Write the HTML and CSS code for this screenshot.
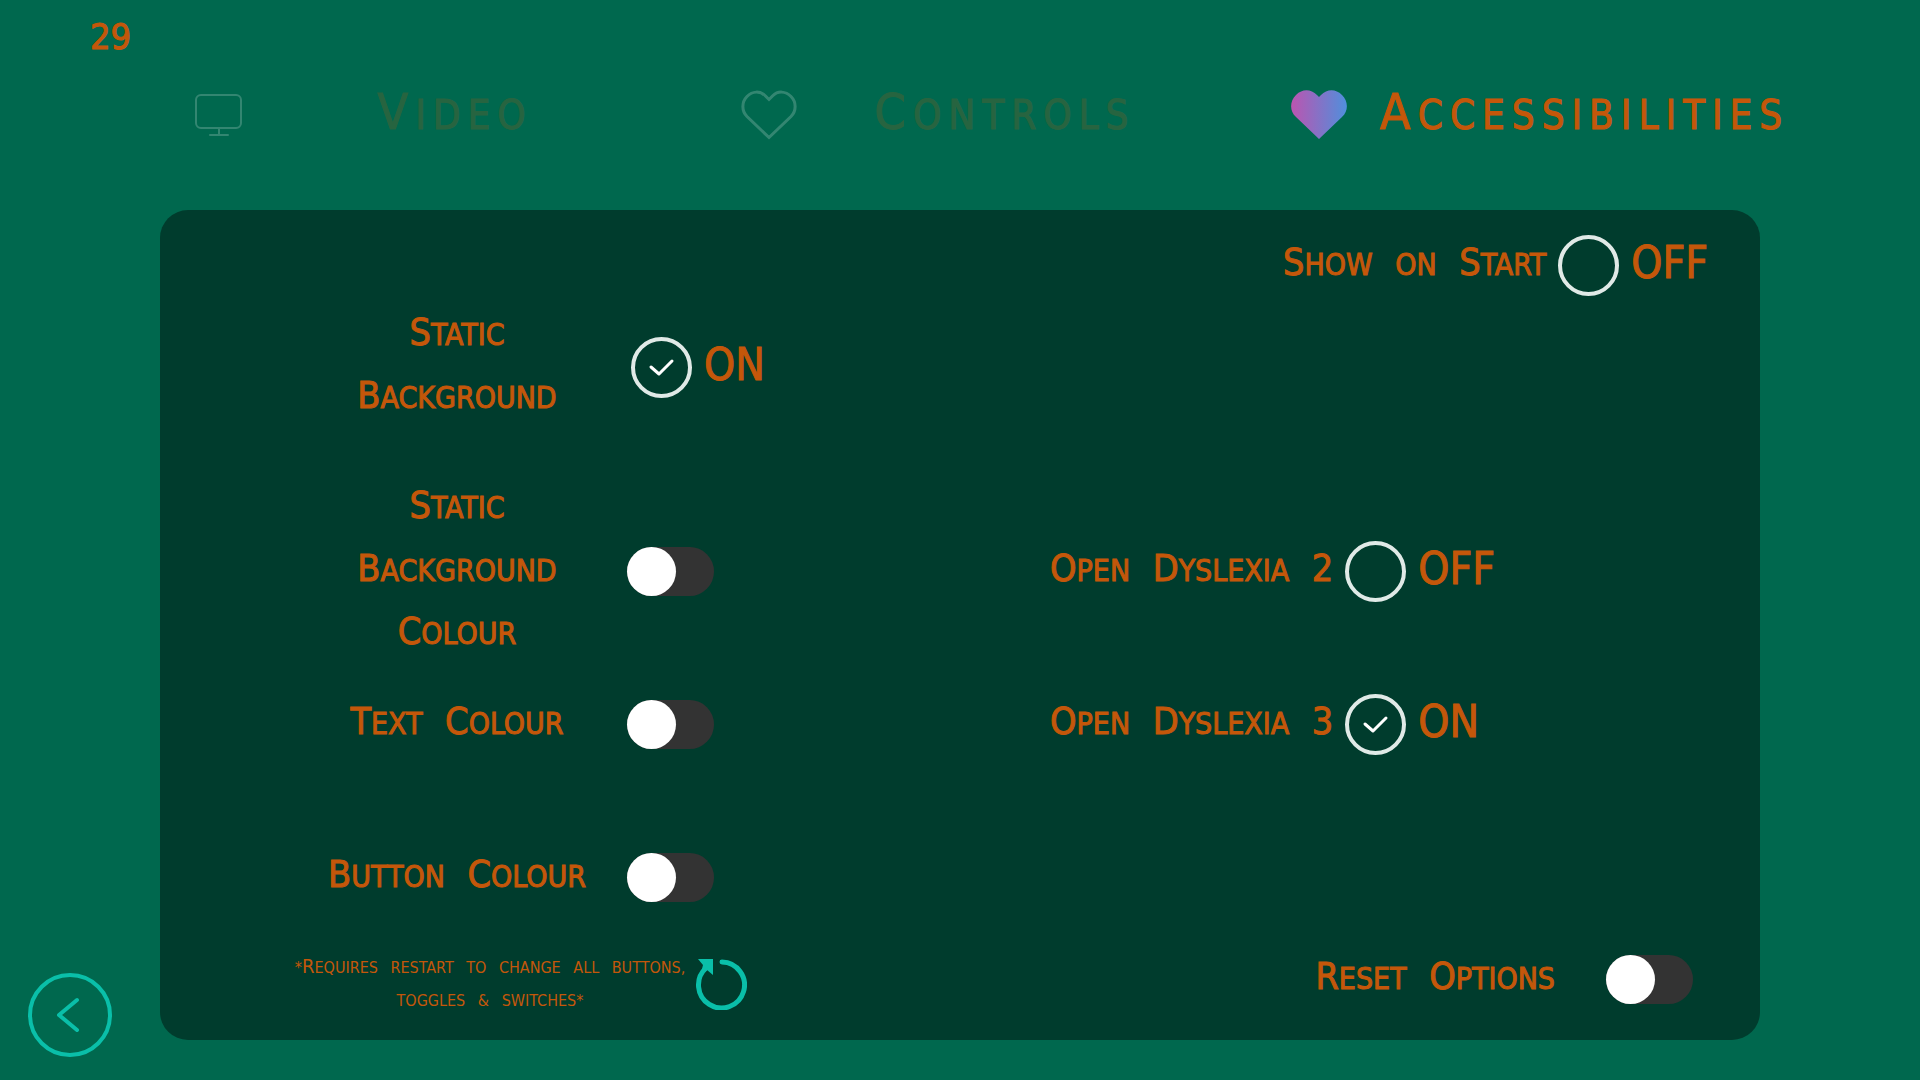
FILE: index.html
```html
<!DOCTYPE html>
<html lang="en">
<head>
    <meta charset="UTF-8">
    <meta name="viewport" content="width=device-width, initial-scale=1.0">
    <title>Options - Accessibilities</title>
    <link rel="stylesheet" href="styles.css">
</head>
<body>
    <div class="page">
        <header>
            <div class="fps">29</div>
            <nav class="tabs">
                <button type="button" class="tab">
                    <svg class="tab-icon" viewBox="0 0 56 50" fill="none" stroke="#fff" stroke-width="2" stroke-linecap="round">
                        <rect x="5" y="5" width="45" height="33" rx="5"/>
                        <path d="M28 38v7M19 45h18"/>
                    </svg>
                    <span class="tab-label"><span class="word">Video</span></span>
                </button>
                <button type="button" class="tab">
                    <svg class="tab-icon" viewBox="0 0 56 50" fill="none" stroke="#fff" stroke-width="3">
                        <path d="M28 47.500L6 26.500C.500 21 .500 12 6 6.500S19 .500 24.500 6L28 9.500L31.500 6C37 .500 44.500 1 50 6.500S55.500 21 50 26.500Z"/>
                    </svg>
                    <span class="tab-label"><span class="word">Controls</span></span>
                </button>
                <button type="button" class="tab active">
                    <svg class="tab-icon" viewBox="0 0 56 50">
                        <defs>
                            <linearGradient id="heart-fill">
                                <stop offset="0" stop-color="#bb55b0"/>
                                <stop offset="1" stop-color="#508fdc"/>
                            </linearGradient>
                        </defs>
                        <path fill="url(#heart-fill)" d="M28 49L5 27C-1.500 21-1.500 11.500 5 5S20-1 26 5L28 7L30 5C36-1 44.500-1.500 51 5S57.500 21 51 27Z"/>
                    </svg>
                    <span class="tab-label"><span class="word">Accessibilities</span></span>
                </button>
            </nav>
        </header>

        <main>
            <button type="button" class="back" aria-label="Back">
                <svg viewBox="0 0 84 84" fill="none" stroke="#0abfa9" stroke-width="4" stroke-linecap="round" stroke-linejoin="round">
                    <circle cx="42" cy="42" r="40"/>
                    <path d="M49 27L31 42L49 57"/>
                </svg>
            </button>

            <form class="panel">
                <div class="row show-start">
                    <label for="show-start"><span class="word">Show</span> <span class="small">on</span> <span class="word">Start</span></label>
                    <span class="check">
                        <input type="checkbox" id="show-start">
                        <svg viewBox="0 0 61 61"><path d="M20 30L28 37L41 24"/></svg>
                    </span>
                    <output for="show-start">OFF</output>
                </div>

                <div class="row left static-bg">
                    <label for="static-bg"><span class="word">Static</span><br><span class="word">Background</span></label>
                    <span class="check">
                        <input type="checkbox" id="static-bg" checked>
                        <svg viewBox="0 0 61 61"><path d="M20 30L28 37L41 24"/></svg>
                    </span>
                    <output for="static-bg">ON</output>
                </div>

                <!-- colour toggles -->
                <div class="row left line-1">
                    <label for="bg-colour"><span class="word">Static</span><br><span class="word">Background</span><br><span class="word">Colour</span></label>
                    <input type="checkbox" class="toggle" id="bg-colour">
                </div>
                <div class="row left line-2">
                    <label for="text-colour"><span class="word">Text</span> <span class="word">Colour</span></label>
                    <input type="checkbox" class="toggle" id="text-colour">
                </div>
                <div class="row left line-3">
                    <label for="button-colour"><span class="word">Button</span> <span class="word">Colour</span></label>
                    <input type="checkbox" class="toggle" id="button-colour">
                </div>

                <!-- dyslexia fonts -->
                <div class="row right line-1">
                    <label for="dyslexia-2"><span class="word">Open</span> <span class="word">Dyslexia</span> <span class="word">2</span></label>
                    <span class="check">
                        <input type="checkbox" id="dyslexia-2">
                        <svg viewBox="0 0 61 61"><path d="M20 30L28 37L41 24"/></svg>
                    </span>
                    <output for="dyslexia-2">OFF</output>
                </div>
                <div class="row right line-2">
                    <label for="dyslexia-3"><span class="word">Open</span> <span class="word">Dyslexia</span> <span class="word">3</span></label>
                    <span class="check">
                        <input type="checkbox" id="dyslexia-3" checked>
                        <svg viewBox="0 0 61 61"><path d="M20 30L28 37L41 24"/></svg>
                    </span>
                    <output for="dyslexia-3">ON</output>
                </div>

                <div class="restart">
                    <p>*<span class="big">R</span>equires restart to change all buttons,<br>toggles &amp; switches*</p>
                    <button type="button" class="restart-btn" aria-label="Restart">
                        <svg viewBox="0 0 52 52">
                            <path fill="none" stroke="#0abfa9" stroke-width="5" stroke-linecap="round" d="M27 4A23 23 0 1 1 11 10"/>
                            <path fill="#0abfa9" d="M3 1H18V17L12 12L10 14L7 11L8 7Z"/>
                        </svg>
                    </button>
                </div>
                <div class="row reset">
                    <label for="reset"><span class="word">Reset</span> <span class="word">Options</span></label>
                    <input type="checkbox" class="toggle" id="reset">
                </div>
            </form>
        </main>
    </div>
</body>
</html>
```
FILE: styles.css
```css
* {
    margin: 0;
    padding: 0;
    box-sizing: border-box;
}

body {
    background-color: #00684e;
    color: #c4570a;
    font-family: "DejaVu Sans Condensed", "DejaVu Sans", sans-serif;
    font-stretch: condensed;
    -webkit-text-stroke: 1px #c4570a;
}

button {
    border: none;
    background: none;
    color: inherit;
    font: inherit;
    cursor: pointer;
}

svg {
    display: block;
}

.page {
    min-height: 100vh;
    display: flex;
    flex-direction: column;
}

.fps {
    padding-left: 90px;
    font-size: 36px;
    line-height: 74px;
}

/* top tabs */
.tabs {
    display: grid;
    grid-template-columns: repeat(3, 1fr);
    height: 82px;
    margin-bottom: 54px;
    padding: 0 79px 0 191px;
}

.tab {
    display: flex;
    align-items: center;
    gap: 33px;
    opacity: 0.2;
}

.tab.active {
    opacity: 1;
}

.tab-icon {
    width: 56px;
    height: 50px;
}

.tab-label {
    min-width: 350px;
    padding-bottom: 6px;
    text-align: center;
    font-size: 40px;
    letter-spacing: 7px;
}

/* capitals with a taller first letter */
.word {
    display: inline-block;
    text-transform: uppercase;
}

.word::first-letter {
    font-size: 125%;
    line-height: 1;
}

.small {
    text-transform: uppercase;
}

main {
    flex: 1;
    display: grid;
    grid-template-columns: 160px 1fr 160px;
}

.back {
    align-self: end;
    justify-self: start;
    width: 84px;
    height: 84px;
    margin: 0 0 23px 28px;
}

/* options panel */
.panel {
    display: grid;
    grid-template-columns: 1fr 1fr;
    grid-template-rows: 110px 94px 81px repeat(3, 153px) 1fr;
    margin-bottom: 40px;
    background-color: #003c2d;
    border-radius: 28px;
}

.row {
    display: flex;
    align-items: center;
    gap: 8px;
}

.row label {
    padding-bottom: 2px;
    font-size: 30px;
    line-height: 63px;
    word-spacing: 14px;
    white-space: nowrap;
}

.row output {
    padding-bottom: 6px;
    font-size: 44px;
}

.left {
    grid-column: 1;
    padding-left: 135px;
}

.left label {
    width: 324px;
    text-align: center;
}

.right {
    grid-column: 2;
    padding-left: 90px;
}

.right label {
    min-width: 283px;
    text-align: right;
}

.show-start {
    grid-area: 1 / 2;
    justify-content: flex-end;
    padding-right: 52px;
}

.static-bg {
    grid-row: 2;
}

.line-1 {
    grid-row: 4;
}

.line-2 {
    grid-row: 5;
}

.line-3 {
    grid-row: 6;
}

.reset {
    grid-area: 7 / 2;
    align-self: start;
    justify-content: flex-end;
    gap: 51px;
    height: 51px;
    padding-right: 67px;
}

.check {
    display: grid;
    width: 61px;
    height: 61px;
    margin: 0 4px;
}

.check input,
.check svg {
    grid-area: 1 / 1;
    width: 61px;
    height: 61px;
}

.check input {
    appearance: none;
    border: 4px solid #e0eae7;
    border-radius: 50%;
}

.check svg {
    visibility: hidden;
    fill: none;
    stroke: #fff;
    stroke-width: 3;
    stroke-linecap: round;
    stroke-linejoin: round;
    pointer-events: none;
}

.check input:checked + svg {
    visibility: visible;
}

.toggle {
    appearance: none;
    display: flex;
    width: 87px;
    height: 49px;
    border-radius: 25px;
    background-color: #333;
}

.toggle::before {
    content: "";
    width: 49px;
    height: 49px;
    border-radius: 50%;
    background-color: #fff;
}

.toggle:checked {
    justify-content: flex-end;
}

/* restart note */
.restart {
    grid-area: 7 / 1;
    align-self: start;
    display: flex;
    align-items: center;
    gap: 6px;
    height: 60px;
    padding-left: 131px;
}

.restart p {
    width: 398px;
    text-align: center;
    text-transform: uppercase;
    white-space: nowrap;
    font-size: 16px;
    line-height: 33px;
    word-spacing: 8px;
    -webkit-text-stroke-width: 0;
}

.restart .big {
    font-size: 20px;
    line-height: 1;
}

.restart-btn {
    width: 52px;
    height: 52px;
}
```
